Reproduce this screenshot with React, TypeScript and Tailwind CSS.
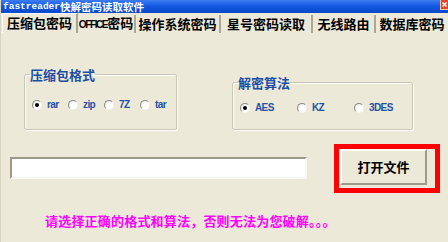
import React from "react";

const tabs = [
  { id: 1, title: "压缩包密码", w: "w-[76px]", active: true },
  { id: 2, title: "OFFICE密码", w: "w-[58px]" },
  { id: 3, title: "操作系统密码", w: "w-[85px]" },
  { id: 4, title: "星号密码读取", w: "w-[92px]" },
  { id: 5, title: "无线路由", w: "w-[63px]" },
  { id: 6, title: "数据库密码", w: "w-[74px]" },
];

const formats = [
  { id: 1, title: "rar", checked: true },
  { id: 2, title: "zip" },
  { id: 3, title: "7Z" },
  { id: 4, title: "tar" },
];

const algos = [
  { id: 1, title: "AES", checked: true },
  { id: 2, title: "KZ" },
  { id: 3, title: "3DES" },
];

const cjk = "font-['Noto_Sans_CJK_SC','Noto_Sans',sans-serif]";

const Radio = ({ checked }: { checked?: boolean }) => (
  <span className="flex justify-center items-center w-[10px] h-[10px] rounded-full border border-t-[#8a8a8a] border-l-[#8a8a8a] border-b-[#f4f4f4] border-r-[#f4f4f4] bg-[radial-gradient(circle_at_60%_60%,#ffffff_40%,#dcdcdc_100%)] shrink-0">
    {checked && <span className="w-[4px] h-[4px] rounded-full bg-black" />}
  </span>
);

const RadioItem = ({ title, checked, w }: { title: string; checked?: boolean; w: string }) => (
  <div className={`flex items-center gap-[5px] ${w}`}>
    <Radio checked={checked} />
    <span className="font-['Liberation_Sans',sans-serif] text-[10px] font-bold leading-[12px] tracking-[-0.6px] text-[#2552a6]">
      {title}
    </span>
  </div>
);

const App = () => {
  return (
    <div className="w-[448px] h-[242px] bg-[#ECE9D8] overflow-hidden flex flex-col border-l border-l-[#d8d4c2]">
      {/* title bar */}
      <div className="flex justify-between items-start h-[13px] bg-gradient-to-b from-[#3b7cf2] via-[#1157e0] to-[#0a48c8]">
        <div className="flex items-end h-[13px] pl-[2px] pb-[1px] text-white font-bold">
          <span className="font-['Liberation_Mono',monospace] text-[9.5px] leading-[10px]">fastreader</span>
          <span className={`${cjk} text-[10.5px] leading-[11px]`}>快解密码读取软件</span>
        </div>
        <div className="w-[8px] h-[10px] bg-[#dc4a2a] border-l border-b border-[#f4c0a8]">
          <svg width="7" height="9" viewBox="0 0 7 9" fill="none">
            <path d="M1.5 2.5L5.5 6.5M5.5 2.5L1.5 6.5" stroke="white" strokeWidth={1.4} />
          </svg>
        </div>
      </div>

      {/* tabs */}
      <div className="flex items-end h-[20px] pl-[1px]">
        {tabs.map((tab) => (
          <div
            key={tab.id}
            className={`flex justify-center items-center shrink-0 ${tab.w} ${
              tab.active
                ? "h-[20px] border-t border-l border-white border-r-2 border-r-[#a7a391]"
                : "h-[18px] border-r-2 border-r-[#aca899]"
            }`}
          >
            <span className={`${cjk} font-bold text-[13px] leading-[14px] text-black whitespace-nowrap ${tab.active ? "pb-[2px]" : ""}`}>
              {tab.id === 2 ? (
                <>
                  <span className="font-['Liberation_Sans',sans-serif] text-[10px] tracking-[-1.4px]">OFFICE</span>
                  密码
                </>
              ) : (
                tab.title
              )}
            </span>
          </div>
        ))}
      </div>

      {/* option groups */}
      <div className="flex items-start pl-[23px] mt-[35px]">
        <fieldset className="w-[153px] h-[62px] border border-[#c9c6b6] rounded-[2px] pl-[5px] shadow-[inset_1px_1px_0_#fff,1px_1px_0_#fff]">
          <legend className={`${cjk} font-bold text-[13px] leading-[13px] text-[#1c4fa3]`}>压缩包格式</legend>
          <div className="flex items-center mt-[18px] pl-[2px]">
            {formats.map((f) => (
              <RadioItem key={f.id} title={f.title} checked={f.checked} w="w-[36px]" />
            ))}
          </div>
        </fieldset>

        <fieldset className="ml-[55px] mt-[8px] w-[181px] h-[54px] border border-[#c9c6b6] rounded-[2px] pl-[5px] shadow-[inset_1px_1px_0_#fff,1px_1px_0_#fff]">
          <legend className={`${cjk} font-bold text-[13px] leading-[13px] text-[#1c4fa3]`}>解密算法</legend>
          <div className="flex items-center mt-[13px] pl-[2px]">
            {algos.map((a) => (
              <RadioItem key={a.id} title={a.title} checked={a.checked} w="w-[57px]" />
            ))}
          </div>
        </fieldset>
      </div>

      {/* file row */}
      <div className="flex items-start pl-[9px] mt-[14px]">
        <div className="mt-[13px] w-[297px] h-[22px] bg-white border-2 border-t-[#9d9a8c] border-l-[#9d9a8c] border-b-[#f7f6f0] border-r-[#f7f6f0]" />
        <div className="ml-[27px] w-[106px] h-[49px] border-[5px] border-[#ff0000]">
          <button className="ml-[1px] w-[87px] h-[36px] flex justify-center items-center bg-[#ECE9D8] border-2 border-t-white border-l-white border-b-[#9d9a8c] border-r-[#9d9a8c]">
            <span className={`${cjk} font-bold text-[13px] leading-[14px] text-black`}>打开文件</span>
          </button>
        </div>
      </div>

      {/* hint */}
      <p className={`${cjk} mt-[21px] pl-[44px] font-bold text-[13px] leading-[14px] tracking-[0.2px] text-[#ff00ff] whitespace-nowrap`}>
        请选择正确的格式和算法，否则无法为您破解。。。
      </p>
    </div>
  );
};

export default App;
